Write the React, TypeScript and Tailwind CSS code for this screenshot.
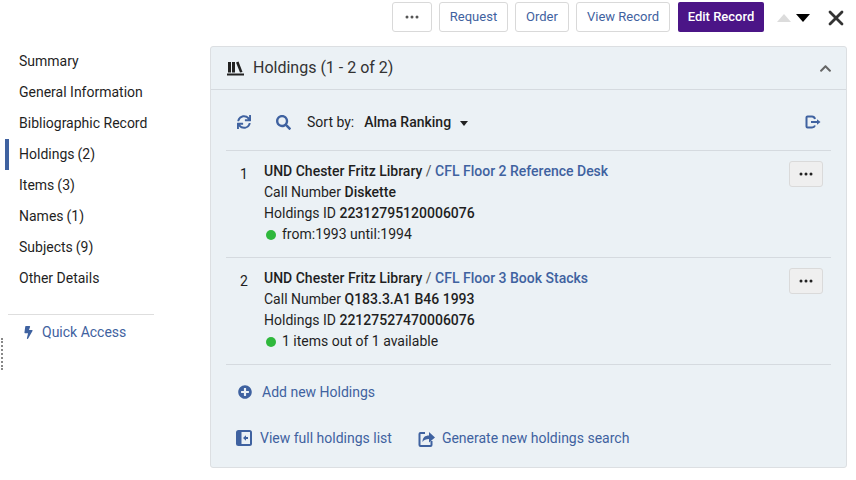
import { X } from 'lucide-react';
import { FaBolt, FaChevronUp, FaPlusCircle, FaSearch, FaSync } from 'react-icons/fa';

const NAV = [
  { label: 'Summary' },
  { label: 'General Information' },
  { label: 'Bibliographic Record' },
  { label: 'Holdings', count: 2, active: true },
  { label: 'Items', count: 3 },
  { label: 'Names', count: 1 },
  { label: 'Subjects', count: 9 },
  { label: 'Other Details' },
];

const HOLDINGS = [
  {
    n: 1,
    location: 'CFL Floor 2 Reference Desk',
    call: 'Diskette',
    id: '22312795120006076',
    status: 'from:1993 until:1994',
  },
  {
    n: 2,
    location: 'CFL Floor 3 Book Stacks',
    call: 'Q183.3.A1 B46 1993',
    id: '22127527470006076',
    status: '1 items out of 1 available',
  },
];

function Dots() {
  return (
    <svg width="14" height="4" viewBox="0 0 14 4" fill="currentColor">
      <circle cx="2" cy="2" r="1.5" />
      <circle cx="7" cy="2" r="1.5" />
      <circle cx="12" cy="2" r="1.5" />
    </svg>
  );
}

function ToolbarButton({ label, w }: { label: string; w: string }) {
  return (
    <button className={`h-[30px] ${w} rounded-[3px] border border-[#d9d9d9] bg-white text-[13px] text-[#3f62a0]`}>
      {label}
    </button>
  );
}

function BooksIcon() {
  return (
    <svg width="17" height="15" viewBox="0 0 17 15" fill="#222">
      <rect x="1" y="1" width="3" height="10.500" />
      <rect x="5" y="1" width="3" height="10.500" />
      <path d="M9 1.500 11.500 0.500 15.500 11 13 11.500Z" />
      <rect x="0" y="12.500" width="17" height="2" />
    </svg>
  );
}

function ExportIcon() {
  return (
    <svg width="16" height="14" viewBox="0 0 16 14" fill="none" stroke="#3f62a0" strokeWidth="2">
      <path d="M7 1.500H2.500a1 1 0 0 0-1 1v9a1 1 0 0 0 1 1H7c1.500 0 2.500-.7 3-2" strokeLinejoin="round" />
      <path d="M7 1.500c1.500 0 2.500.7 3 2.500" />
      <path d="M6 7h6.500" />
      <path d="M12 4.300 15.500 7 12 9.700z" fill="#3f62a0" stroke="none" />
    </svg>
  );
}

function PanelIcon() {
  return (
    <svg width="16" height="16" viewBox="0 0 16 16">
      <rect width="16" height="16" rx="2.500" fill="#3f62a0" />
      <rect x="5.500" y="2" width="8.500" height="12" fill="#ebf1f5" />
      <path d="M7 8l3-2.800v1.900h2v1.800h-2v1.900z" fill="#3f62a0" />
    </svg>
  );
}

function ShareIcon() {
  return (
    <svg width="17" height="17" viewBox="0 0 17 17" fill="none">
      <path d="M7 3H2.500a1 1 0 0 0-1 1v11a1 1 0 0 0 1 1h10a1 1 0 0 0 1-1v-4" stroke="#3f62a0" strokeWidth="2" />
      <path d="M4.500 12c0-4.500 2.500-6.500 6.500-6.500V2l6 5.500-6 5V9c-3 0-5 .7-6.500 3z" fill="#3f62a0" />
    </svg>
  );
}

export default function App() {
  return (
    <div
      className="relative h-[480px] w-[856px] overflow-hidden bg-white text-[14px] text-[#1f1f1f]"
      style={{ fontFamily: 'Roboto, sans-serif' }}
    >
      {/* Top actions */}
      <div className="flex h-[46px] items-start pt-[2px]">
        <div className="ml-[392px] flex gap-[7px]">
          <button className="flex h-[30px] w-[40px] items-center justify-center rounded-[3px] border border-[#d9d9d9] bg-white text-[#555]">
            <Dots />
          </button>
          <ToolbarButton label="Request" w="w-[69px]" />
          <ToolbarButton label="Order" w="w-[54px]" />
          <ToolbarButton label="View Record" w="w-[94px]" />
          <button className="ml-px h-[30px] w-[86px] rounded-[2px] bg-[#4b1587] text-[13px] font-medium text-white">
            Edit Record
          </button>
        </div>
        <div className="ml-[13px] mt-[12px] h-0 w-0 border-x-[7px] border-b-[8px] border-x-transparent border-b-[#dcdcdc]" />
        <div className="ml-[5px] mt-[12px] h-0 w-0 border-x-[7px] border-t-[8px] border-x-transparent border-t-black" />
        <X className="ml-[14px] mt-[4px] text-[#333]" size={24} strokeWidth={2.75} />
      </div>

      <div className="flex">
        {/* Left navigation */}
        <nav className="ml-[5px] w-[149px]">
          {NAV.map((item) => (
            <div
              key={item.label}
              className={`flex h-[31px] items-center border-l-4 pl-[10px] ${item.active ? 'border-[#3f62a0]' : 'border-transparent'}`}
            >
              {item.label}
              {item.count !== undefined && <span className="ml-[3px]">({item.count})</span>}
            </div>
          ))}
          <div className="ml-[3px] mt-[20px] border-t border-[#dedede]" />
          <div className="ml-[17px] mt-[8px] flex h-[18px] items-center text-[#3f62a0]">
            <FaBolt size={13} />
            <span className="ml-[7px]">Quick Access</span>
          </div>
        </nav>

        {/* Holdings panel */}
        <section className="ml-[56px] h-[422px] w-[637px] rounded-[3px] border border-[#dcdfe2] bg-[#ebf1f5]">
          <header className="flex h-[43px] items-center border-b border-[#d5dadf] pl-[16px] pr-[14px]">
            <BooksIcon />
            <h2 className="ml-[9px] text-[16px] font-normal text-[#333]">Holdings (1 - 2 of 2)</h2>
            <FaChevronUp className="ml-auto text-[#666]" size={13} />
          </header>

          <div className="px-[15px]">
            <div className="flex h-[61px] items-center border-b border-[#d5dadf] px-[10px] pt-[4px]">
              <FaSync size={14} className="ml-px text-[#3f62a0]" />
              <FaSearch size={15} className="ml-[25px] text-[#3f62a0]" />
              <span className="ml-[16px]">Sort by:</span>
              <span className="ml-[10px] font-medium">Alma Ranking</span>
              <div className="ml-[9px] mt-[2px] h-0 w-0 border-x-[4px] border-t-[5px] border-x-transparent border-t-[#222]" />
              <div className="ml-auto">
                <ExportIcon />
              </div>
            </div>

            {HOLDINGS.map((h) => (
              <div key={h.n} className="flex h-[107px] border-b border-[#d5dadf] pt-[10px]">
                <div className="w-[38px] pl-[14px] pt-[3px]">{h.n}</div>
                <div className="leading-[21px]">
                  <div>
                    <span className="font-medium">UND Chester Fritz Library</span>
                    <span className="text-[#555]"> / </span>
                    <span className="font-medium text-[#3f62a0]">{h.location}</span>
                  </div>
                  <div>
                    Call Number <span className="font-medium">{h.call}</span>
                  </div>
                  <div>
                    Holdings ID <span className="font-medium">{h.id}</span>
                  </div>
                  <div className="flex items-center pl-[2px]">
                    <span className="mr-[6px] h-[10px] w-[10px] rounded-full bg-[#2fb83c]" />
                    {h.status}
                  </div>
                </div>
                <button className="ml-auto mr-[8px] flex h-[26px] w-[34px] items-center justify-center rounded-[3px] border border-[#dadada] bg-[#efefef] text-[#222]">
                  <Dots />
                </button>
              </div>
            ))}

            <div className="mt-[17px] flex h-[20px] items-center pl-[12px] text-[#3f62a0]">
              <FaPlusCircle size={14} />
              <span className="ml-[10px]">Add new Holdings</span>
            </div>

            <div className="mt-[26px] flex h-[20px] items-center pl-[10px] text-[#3f62a0]">
              <PanelIcon />
              <span className="ml-[8px]">View full holdings list</span>
              <span className="ml-[26px]">
                <ShareIcon />
              </span>
              <span className="ml-[7px]">Generate new holdings search</span>
            </div>
          </div>
        </section>
      </div>

      {/* Resize handle */}
      <div className="absolute left-px top-[338px] h-[32px] border-l-2 border-dotted border-[#888]" />
    </div>
  );
}
